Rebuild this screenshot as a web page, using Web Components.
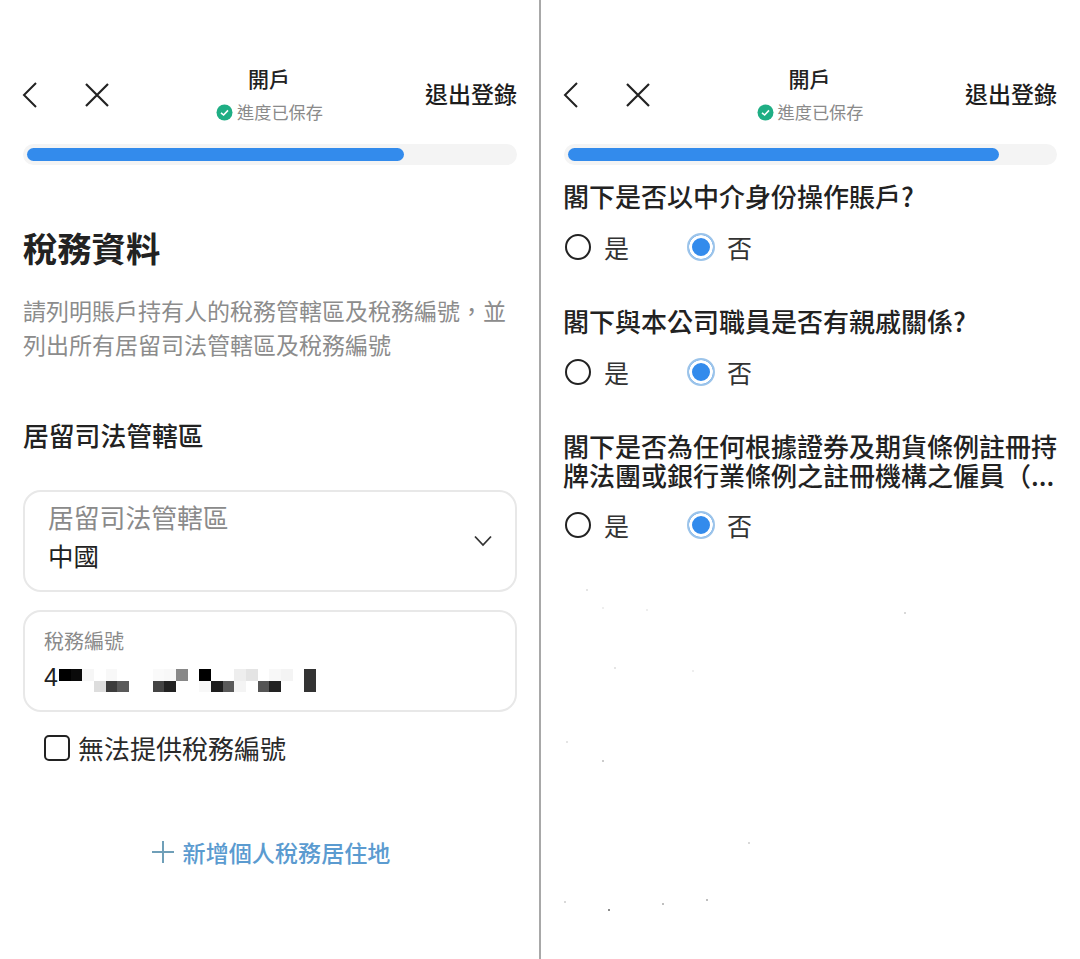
<!DOCTYPE html>
<html lang="zh-Hant"><head><meta charset="utf-8"><style>
html,body{margin:0;padding:0;background:#fff;}
body{font-family:"Noto Sans CJK TC","Noto Sans",sans-serif;color:#1a1a1a;}
#page{display:flex;width:1080px;height:959px;overflow:hidden;}
</style></head><body>
<div id="page">
<split-pane>
<top-bar progress="377"></top-bar>
<tax-form></tax-form>
</split-pane>
<split-pane divider>
<top-bar progress="431"></top-bar>
<q-list>
<q-item style="--mt:16px">閣下是否以中介身份操作賬戶?</q-item>
<q-item style="--mt:41px">閣下與本公司職員是否有親戚關係?</q-item>
<q-item style="--mt:41px;--gap:18px">閣下是否為任何根據證券及期貨條例註冊持牌法團或銀行業條例之註冊機構之僱員（...</q-item>
</q-list>
<speck-layer></speck-layer>
</split-pane>
</div>
<script>
function def(n,html,init){customElements.define(n,class extends HTMLElement{constructor(){super();this.attachShadow({mode:'open'}).innerHTML=html;}connectedCallback(){if(init)init(this);}});}
def('split-pane',`<style>:host{display:block;width:540px;height:959px;box-sizing:border-box;position:relative;flex:none}
:host([divider]){border-left:2px solid #a8a8a8;margin-left:-1px;width:541px}</style><slot></slot>`);
def('top-bar',`<style>
:host{display:block;padding:68px 23px 0 23px;}
.row{display:flex;justify-content:space-between;align-items:flex-start;height:76px;position:relative}
.icons{display:flex;gap:32px;padding-top:14px;margin-left:-1px}
svg{display:block}
.mid{position:absolute;left:0;right:0;top:-2px;display:flex;flex-direction:column;align-items:center;}
.t{font-size:21px;line-height:24px;font-weight:500;color:#222;margin-left:-2px}
.s{display:flex;align-items:center;gap:4px;font-size:17.2px;line-height:24px;color:#8a8a8a;margin-top:10px;margin-left:-1px}
.x{font-size:23px;line-height:28px;font-weight:500;color:#1c1c1c;margin-top:11px}
.track{height:21px;border-radius:11px;background:#f4f4f4;padding:4px;box-sizing:border-box;margin-top:0}
.fill{height:13px;border-radius:7px;background:#338bec;}
</style>
<div class="row"><div class="icons">
<svg width="30" height="26" viewBox="0 0 30 26"><path d="M14 1 2 13l12 12" fill="none" stroke="#222" stroke-width="2"/></svg>
<svg width="26" height="26" viewBox="0 0 26 26"><path d="M2 2 24 24M24 2 2 24" fill="none" stroke="#222" stroke-width="2.2"/></svg>
</div>
<div class="mid"><div class="t">開戶</div><div class="s"><svg width="17" height="17" viewBox="0 0 17 17"><circle cx="8.5" cy="8.5" r="8" fill="#1fae84"/><path d="M5 8.8 7.6 11 12 6.4" fill="none" stroke="#fff" stroke-width="1.6"/></svg>進度已保存</div></div>
<div class="x">退出登錄</div></div>
<div class="track"><div class="fill"></div></div>`,el=>{el.shadowRoot.querySelector('.fill').style.width=el.getAttribute('progress')+'px';});
def('tax-form',`<style>
:host{display:block;padding:0 23px;}
h1{font-size:34.3px;line-height:44px;font-weight:700;margin:60px 0 0;color:#222}
p{font-size:23px;line-height:34px;color:#8c8c8c;margin:24px 0 0;width:490px}
h2{font-size:25.8px;line-height:36px;font-weight:500;margin:56px 0 0;color:#222}
.f{border:2px solid #e8e8e8;border-radius:18px;box-sizing:border-box;display:flex;}
.a{height:102px;margin-top:37px;padding:8px 22px 0 23px;justify-content:space-between;align-items:center}
.a .l{font-size:25.8px;line-height:38px;color:#8a8a8a}
.a .v{font-size:25.5px;line-height:38px;color:#222;margin-top:0}
.a .col{align-self:flex-start;margin-top:-2px}
.b{height:102px;margin-top:18px;flex-direction:column;padding:15px 19px 0}
.b .l{font-size:20px;line-height:28px;color:#8a8a8a}
.b .v{display:flex;align-items:flex-start;margin-top:6px;position:relative;font-family:"Liberation Sans",sans-serif;font-size:25px;line-height:32px;color:#222;}
.m{position:absolute;left:15px;top:8px;display:grid;grid-template-columns:repeat(23,11.7px);grid-auto-rows:11.5px}
.c{display:flex;align-items:center;gap:8px;margin:18px 0 0 21px;font-size:26px;line-height:36px;color:#2a2a2a}
.box{width:22px;height:22px;border:2px solid #222;border-radius:5px;}
.add{display:flex;align-items:center;justify-content:center;gap:9px;font-size:23.1px;line-height:32px;font-weight:500;color:#5b9bd0;margin-top:70px;padding-left:2px}
</style>
<h1>稅務資料</h1>
<p>請列明賬戶持有人的稅務管轄區及稅務編號，並列出所有居留司法管轄區及稅務編號</p>
<h2>居留司法管轄區</h2>
<div class="f a"><div class="col"><div class="l">居留司法管轄區</div><div class="v">中國</div></div>
<svg width="20" height="12" viewBox="0 0 20 12" style="margin-top:-8px"><path d="M2 1.5 10 10l8-8.5" fill="none" stroke="#333" stroke-width="1.8"/></svg></div>
<div class="f b"><div class="l">稅務編號</div><div class="v">4<div class="m"></div></div></div>
<div class="c"><span class="box"></span>無法提供稅務編號</div>
<div class="add"><svg width="22" height="22" viewBox="0 0 22 22"><path d="M11 0v22M0 11h22" stroke="#6f9fb8" stroke-width="2"/></svg>新增個人稅務居住地</div>`,el=>{
const m=el.shadowRoot.querySelector('.m');
const r1={0:'#000',1:'#0a0a0a',2:'#f6f6f6',4:'#f8f8f8',8:'#fafafa',9:'#f8f8f8',10:'#888',12:'#000',15:'#eee',16:'#e4e4e4',18:'#f8f8f8',19:'#f4f4f4',21:'#333'};
const r2={3:'#ddd',4:'#3c3c3c',5:'#5a5a5a',8:'#444',9:'#222',12:'#f8f8f8',13:'#1e1e1e',14:'#5a5a5a',15:'#f4f4f4',17:'#555',18:'#222',21:'#333'};
for(const r of [r1,r2])for(let i=0;i<23;i++){const d=document.createElement('i');d.style.background=r[i]||'transparent';m.appendChild(d);}
});
def('q-list',`<style>:host{display:block;padding:0 22px 0 22px}</style><slot></slot>`);
def('q-item',`<style>
:host{display:block;margin-top:var(--mt)}
.q{font-size:26px;line-height:29px;font-weight:500;color:#222;height:auto}
.o{display:flex;align-items:center;margin-top:var(--gap,19px);padding-left:2px;height:36px;font-size:25px;color:#333}
.r{width:26px;height:26px;border-radius:50%;box-sizing:border-box;border:2.5px solid #222;margin-right:13px;flex:none}
.on{width:28px;height:28px;border:2px solid #9cc4ea;background:#338bec;box-shadow:inset 0 0 0 3px #fff;margin:0 12px 0 58px}
</style><div class="q"><slot></slot></div>
<div class="o"><span class="r"></span>是<span class="r on"></span>否</div>`);
def('speck-layer',`<style>:host{position:absolute;inset:0;display:block;pointer-events:none}
i{position:absolute;width:2px;height:2px;border-radius:1px}</style>`,el=>{
for(const [x,y,c] of [[586,589,'#ddd'],[602,607,'#e8e8e8'],[646,609,'#e8e8e8'],[904,612,'#ccc'],[614,667,'#ddd'],[692,670,'#e8e8e8'],[566,741,'#ddd'],[602,760,'#bbb'],[748,842,'#ccc'],[564,901,'#ccc'],[608,909,'#666'],[662,903,'#aaa'],[706,899,'#aaa']]){
const d=document.createElement('i');d.style.cssText=`left:${x-541}px;top:${y}px;background:${c}`;el.shadowRoot.appendChild(d);}
});
</script>
</body></html>
